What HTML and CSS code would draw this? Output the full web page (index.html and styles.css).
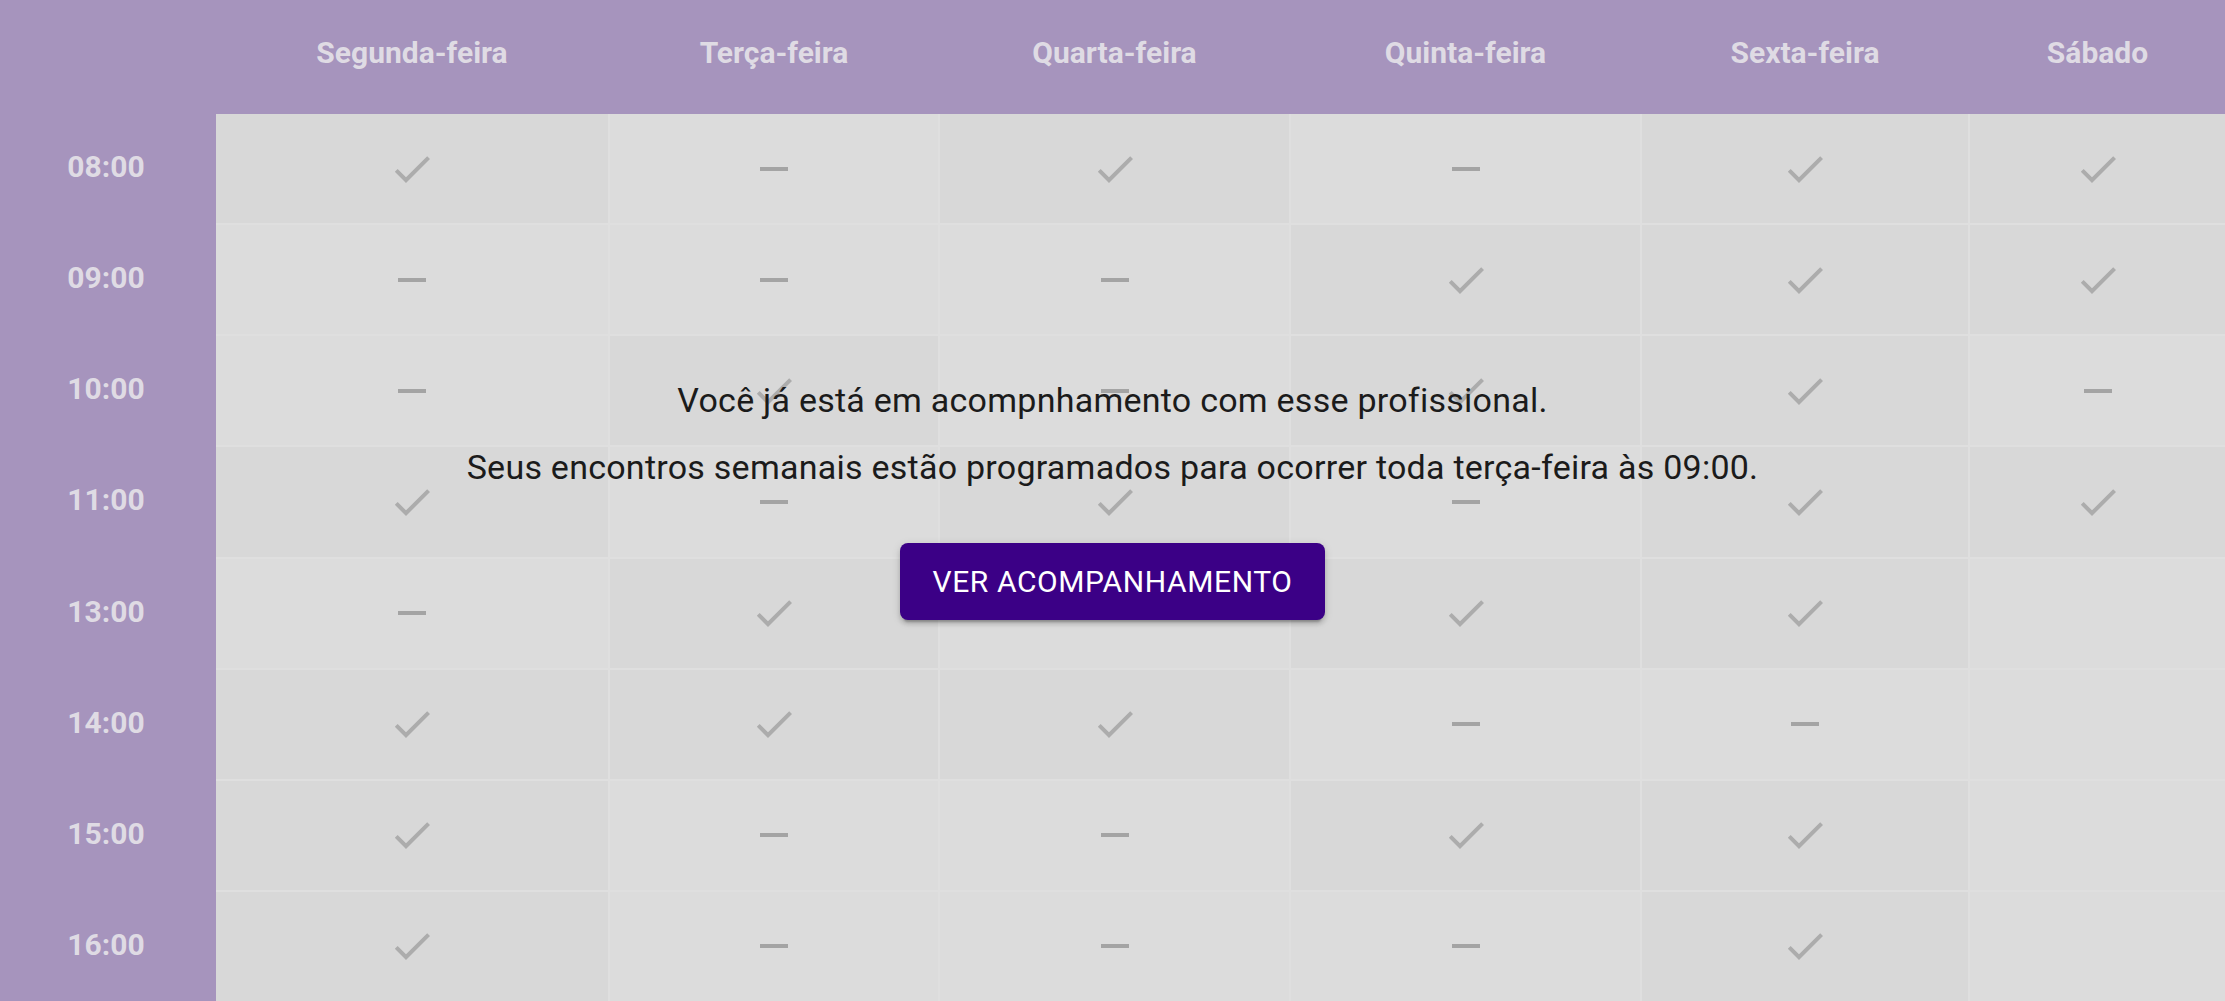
FILE: index.html
```html
<!DOCTYPE html>
<html lang="pt-BR">
<head>
<meta charset="utf-8">
<title>Agenda</title>
<link rel="stylesheet" href="styles.css">
</head>
<body>
<svg class="defs" width="0" height="0" aria-hidden="true">
  <symbol id="i-check" viewBox="0 0 24 24"><path d="M9 16.17L4.83 12l-1.42 1.41L9 19 21 7l-1.41-1.41z"/></symbol>
  <symbol id="i-dash" viewBox="0 0 24 24"><path d="M19 13H5v-2h14v2z"/></symbol>
</svg>
<main class="schedule">
  <div class="corner"></div>
  <div class="days">
    <div class="day">Segunda-feira</div>
    <div class="day">Terça-feira</div>
    <div class="day">Quarta-feira</div>
    <div class="day">Quinta-feira</div>
    <div class="day">Sexta-feira</div>
    <div class="day">Sábado</div>
  </div>
  <div class="times">
    <div class="time">08:00</div>
    <div class="time">09:00</div>
    <div class="time">10:00</div>
    <div class="time">11:00</div>
    <div class="time">13:00</div>
    <div class="time">14:00</div>
    <div class="time">15:00</div>
    <div class="time">16:00</div>
  </div>
  <div class="cells">
    <!-- 08:00 -->
    <div class="cell on"><svg class="ic ck"><use href="#i-check"/></svg></div>
    <div class="cell"><svg class="ic ds"><use href="#i-dash"/></svg></div>
    <div class="cell on"><svg class="ic ck"><use href="#i-check"/></svg></div>
    <div class="cell"><svg class="ic ds"><use href="#i-dash"/></svg></div>
    <div class="cell on"><svg class="ic ck"><use href="#i-check"/></svg></div>
    <div class="cell on"><svg class="ic ck"><use href="#i-check"/></svg></div>
    <!-- 09:00 -->
    <div class="cell"><svg class="ic ds"><use href="#i-dash"/></svg></div>
    <div class="cell"><svg class="ic ds"><use href="#i-dash"/></svg></div>
    <div class="cell"><svg class="ic ds"><use href="#i-dash"/></svg></div>
    <div class="cell on"><svg class="ic ck"><use href="#i-check"/></svg></div>
    <div class="cell on"><svg class="ic ck"><use href="#i-check"/></svg></div>
    <div class="cell on"><svg class="ic ck"><use href="#i-check"/></svg></div>
    <!-- 10:00 -->
    <div class="cell"><svg class="ic ds"><use href="#i-dash"/></svg></div>
    <div class="cell on"><svg class="ic ck"><use href="#i-check"/></svg></div>
    <div class="cell"><svg class="ic ds"><use href="#i-dash"/></svg></div>
    <div class="cell on"><svg class="ic ck"><use href="#i-check"/></svg></div>
    <div class="cell on"><svg class="ic ck"><use href="#i-check"/></svg></div>
    <div class="cell"><svg class="ic ds"><use href="#i-dash"/></svg></div>
    <!-- 11:00 -->
    <div class="cell on"><svg class="ic ck"><use href="#i-check"/></svg></div>
    <div class="cell"><svg class="ic ds"><use href="#i-dash"/></svg></div>
    <div class="cell on"><svg class="ic ck"><use href="#i-check"/></svg></div>
    <div class="cell"><svg class="ic ds"><use href="#i-dash"/></svg></div>
    <div class="cell on"><svg class="ic ck"><use href="#i-check"/></svg></div>
    <div class="cell on"><svg class="ic ck"><use href="#i-check"/></svg></div>
    <!-- 13:00 -->
    <div class="cell"><svg class="ic ds"><use href="#i-dash"/></svg></div>
    <div class="cell on"><svg class="ic ck"><use href="#i-check"/></svg></div>
    <div class="cell"><svg class="ic ds"><use href="#i-dash"/></svg></div>
    <div class="cell on"><svg class="ic ck"><use href="#i-check"/></svg></div>
    <div class="cell on"><svg class="ic ck"><use href="#i-check"/></svg></div>
    <div class="cell"></div>
    <!-- 14:00 -->
    <div class="cell on"><svg class="ic ck"><use href="#i-check"/></svg></div>
    <div class="cell on"><svg class="ic ck"><use href="#i-check"/></svg></div>
    <div class="cell on"><svg class="ic ck"><use href="#i-check"/></svg></div>
    <div class="cell"><svg class="ic ds"><use href="#i-dash"/></svg></div>
    <div class="cell"><svg class="ic ds"><use href="#i-dash"/></svg></div>
    <div class="cell"></div>
    <!-- 15:00 -->
    <div class="cell on"><svg class="ic ck"><use href="#i-check"/></svg></div>
    <div class="cell"><svg class="ic ds"><use href="#i-dash"/></svg></div>
    <div class="cell"><svg class="ic ds"><use href="#i-dash"/></svg></div>
    <div class="cell on"><svg class="ic ck"><use href="#i-check"/></svg></div>
    <div class="cell on"><svg class="ic ck"><use href="#i-check"/></svg></div>
    <div class="cell"></div>
    <!-- 16:00 -->
    <div class="cell on"><svg class="ic ck"><use href="#i-check"/></svg></div>
    <div class="cell"><svg class="ic ds"><use href="#i-dash"/></svg></div>
    <div class="cell"><svg class="ic ds"><use href="#i-dash"/></svg></div>
    <div class="cell"><svg class="ic ds"><use href="#i-dash"/></svg></div>
    <div class="cell on"><svg class="ic ck"><use href="#i-check"/></svg></div>
    <div class="cell"></div>
  </div>

  <section class="notice">
    <p class="notice-title">Você já está em acompnhamento com esse profissional.</p>
    <p class="notice-text">Seus encontros semanais estão programados para ocorrer toda terça-feira às 09:00.</p>
    <button class="btn" type="button">Ver acompanhamento</button>
  </section>
</main>
</body>
</html>
```

FILE: styles.css
```css
html, body {
  margin: 0;
  padding: 0;
  height: 100%;
  overflow: hidden;
  background: #dddddd;
  font-family: Roboto, "Noto Sans", "Liberation Sans", sans-serif;
}

.defs {
  position: absolute;
  width: 0;
  height: 0;
}

.schedule {
  position: relative;
  display: grid;
  grid-template-columns: 216px 1fr;
  grid-template-rows: 114px 887px;
  width: 2225px;
  height: 1001px;
  background: #a694bd;
}

.corner {
  background: #a694bd;
}

.days {
  display: grid;
  grid-template-columns: 392px 328px 349px 349px 326px 255px;
  column-gap: 2px;
  background: #a694bd;
}

.day {
  text-align: center;
  padding-top: 38px;
  font-size: 30px;
  line-height: 30px;
  font-weight: 700;
  color: #dfdbe4;
}

.times {
  display: grid;
  grid-template-rows: repeat(8, 1fr);
  row-gap: 2px;
  background: #a694bd;
}

.time {
  display: flex;
  align-items: center;
  justify-content: center;
  padding-bottom: 4px;
  padding-right: 4px;
  font-size: 30px;
  font-weight: 700;
  color: #dfdbe4;
}

.cells {
  display: grid;
  grid-template-columns: 392px 328px 349px 349px 326px 255px;
  grid-template-rows: repeat(8, 1fr);
  gap: 2px;
  background: #dfdfdf;
}

.cell {
  display: flex;
  align-items: center;
  justify-content: center;
  background: #dcdcdc;
}

.cell.on {
  background: #d8d8d8;
}

.ic {
  width: 48px;
  height: 48px;
}

.ic.ck {
  fill: #acacac;
}

.ic.ds {
  fill: #a4a4a4;
}

.notice {
  position: absolute;
  left: 0;
  right: 0;
  top: 376px;
  display: flex;
  flex-direction: column;
  align-items: center;
}

.notice-title,
.notice-text {
  margin: 0;
  font-size: 34px;
  line-height: 48px;
  font-weight: 400;
  color: #1b1b1b;
  letter-spacing: 0.25px;
}

.notice-text {
  margin-top: 19px;
}

.btn {
  margin-top: 52px;
  width: 425px;
  height: 77px;
  border: 0;
  border-radius: 8px;
  background: #3b0086;
  color: #ffffff;
  font-family: Roboto, "Noto Sans", "Liberation Sans", sans-serif;
  font-size: 30px;
  font-weight: 400;
  letter-spacing: 0.6px;
  text-transform: uppercase;
  box-shadow: 0 6px 2px -4px rgba(0,0,0,0.2), 0 4px 4px 0 rgba(0,0,0,0.14), 0 2px 10px 0 rgba(0,0,0,0.12);
}
```
